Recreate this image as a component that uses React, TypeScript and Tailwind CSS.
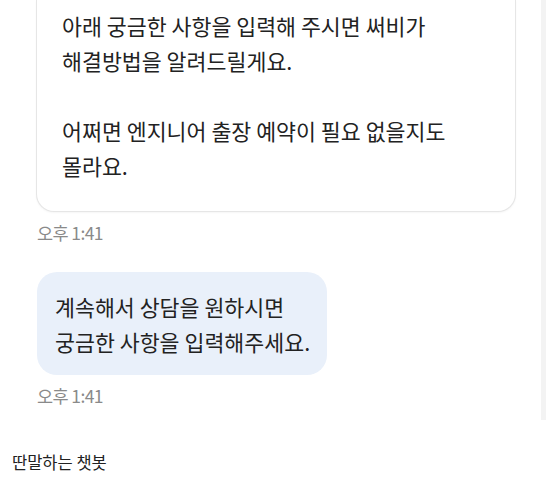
const font = "font-['Noto_Sans_CJK_KR','Noto_Sans',sans-serif]";

function Time() {
  return (
    <p className="ml-[37px] text-[17.5px] leading-[20px] tracking-[-0.6px] text-[#8a8a8a]">
      오후 1:41
    </p>
  );
}

export default function App() {
  return (
    <div className={`${font} w-[546px] h-[479px] bg-white overflow-hidden`}>
      <div className="flex h-[420px]">
        <div className="flex-1 flex flex-col">
          <div className="ml-[36px] mr-[25px] rounded-b-[18px] border border-t-0 border-[#e6e6e6] bg-white pl-[25px] pr-4 pt-[8px] pb-[28px] text-[21.7px] leading-[35px] text-[#222] shadow-[0_1px_2px_rgba(0,0,0,0.04)]">
            <p>아래 궁금한 사항을 입력해 주시면 써비가</p>
            <p>해결방법을 알려드릴게요.</p>
            <p>&nbsp;</p>
            <p>어쩌면 엔지니어 출장 예약이 필요 없을지도</p>
            <p>몰라요.</p>
          </div>
          <div className="mt-[11px]">
            <Time />
          </div>
          <div className="mt-[29px] ml-[37px] w-[290px] rounded-[20px] bg-[#e9f0fa] pl-[18px] pt-[17px] pb-[16px] text-[21.7px] leading-[35px] text-[#222]">
            <p>계속해서 상담을 원하시면</p>
            <p>궁금한 사항을 입력해주세요.</p>
          </div>
          <div className="mt-[11px]">
            <Time />
          </div>
        </div>
        <div className="w-[5px] bg-[#f3f3f3]" />
      </div>
      <p className="mt-[32px] ml-[12px] text-[16.5px] leading-[20px] text-[#222]">
        딴말하는 챗봇
      </p>
    </div>
  );
}
